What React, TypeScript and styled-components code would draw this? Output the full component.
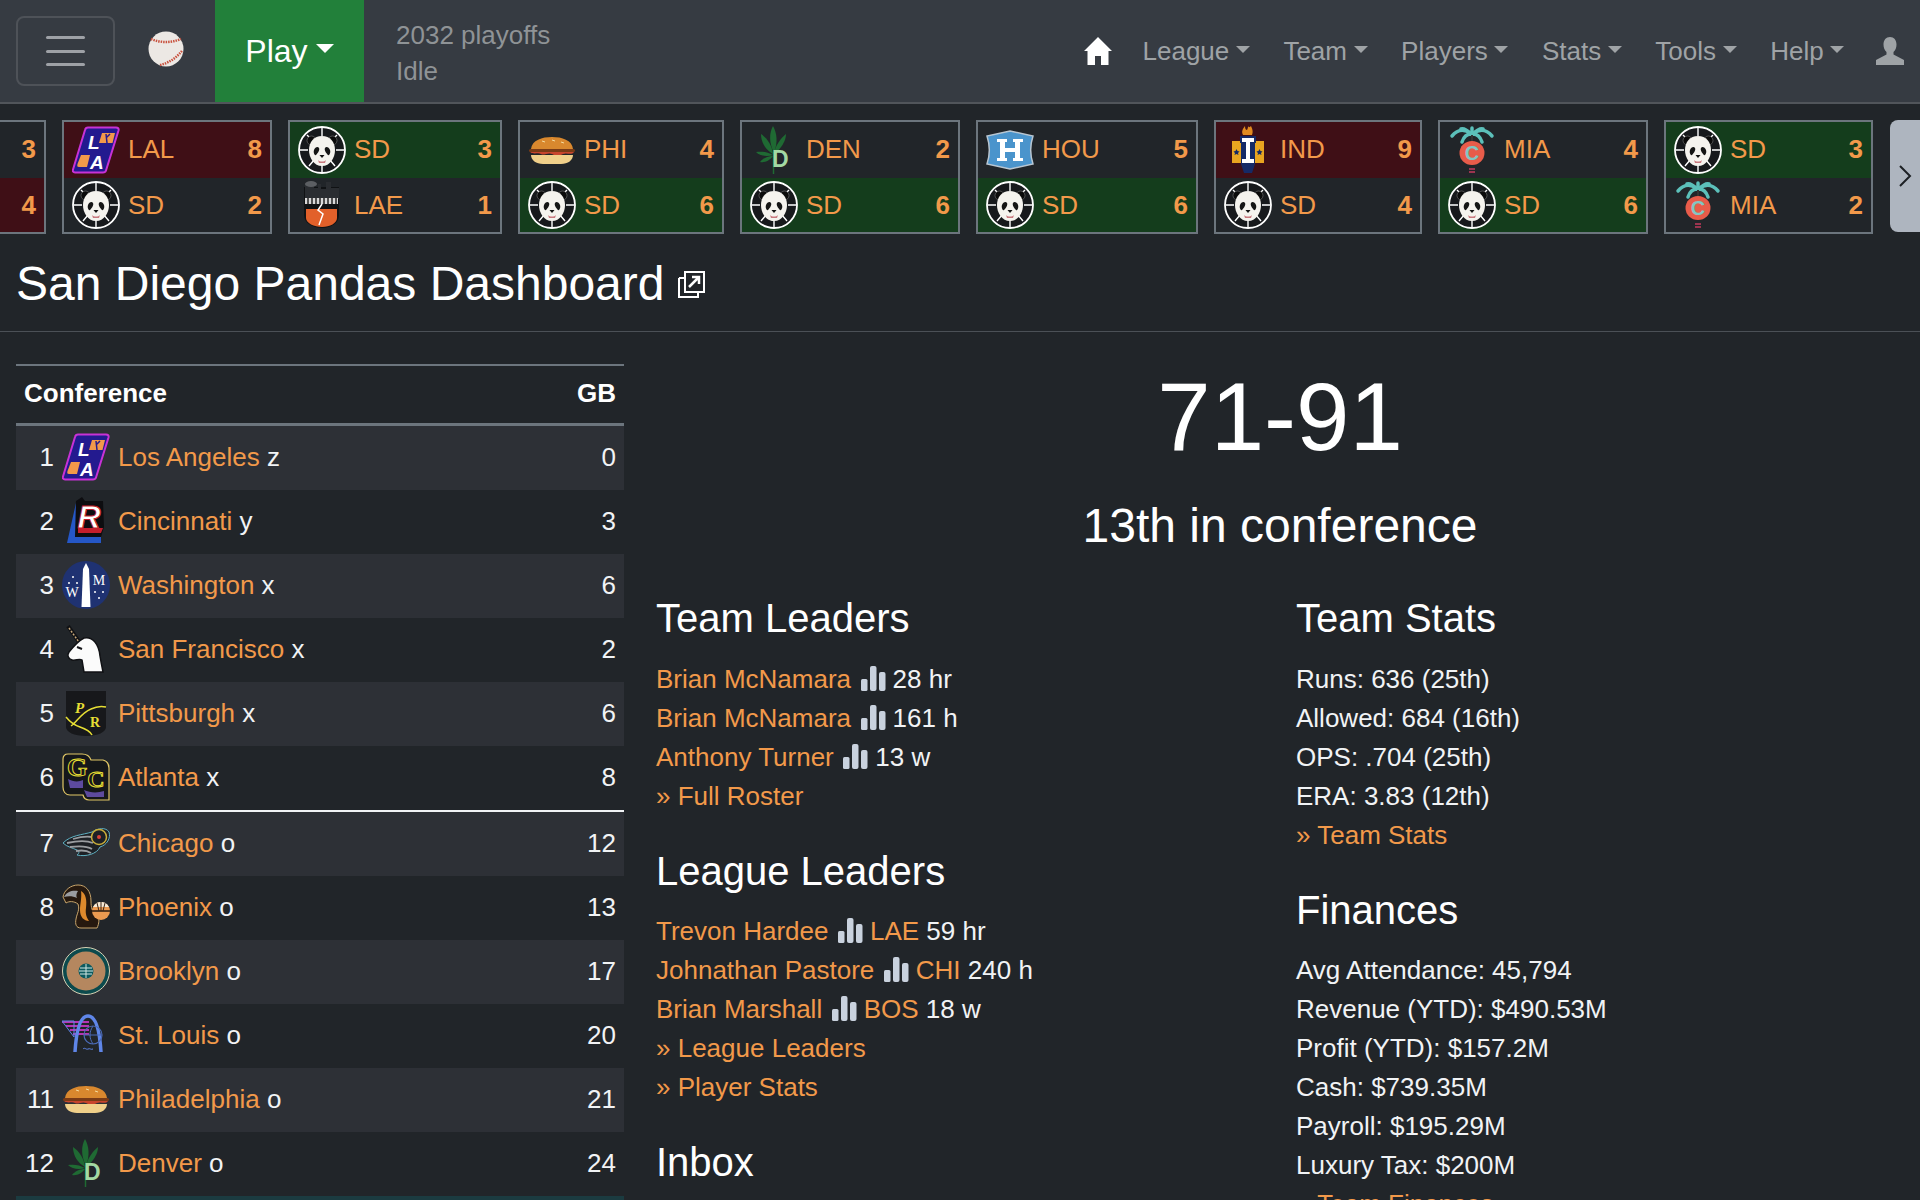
import React from 'react'
import styled, { createGlobalStyle } from 'styled-components'

const ORANGE = '#f2994a'

const GlobalStyle = createGlobalStyle`
  html, body {
    margin: 0;
    padding: 0;
    background: #212529;
  }
  body {
    font-family: "Liberation Sans", Arial, sans-serif;
    font-size: 26px;
    line-height: 39px;
    color: #f1f3f5;
  }
`

const Page = styled.div`
  width: 1920px;
  height: 1200px;
  overflow: hidden;
  background: #212529;
`

/* top navbar */
const Navbar = styled.nav`
  display: flex;
  align-items: stretch;
  height: 102px;
  background: #363b42;
  border-bottom: 2px solid #51555a;
`

const Burger = styled.button`
  display: flex;
  flex-direction: column;
  justify-content: center;
  align-items: center;
  gap: 10.5px;
  box-sizing: border-box;
  width: 99px;
  height: 70px;
  margin: 16px 0 0 16px;
  background: none;
  border: 2px solid #4e5258;
  border-radius: 8px;
  padding: 0;
`

const BurgerLine = styled.span`
  display: block;
  width: 39px;
  height: 3px;
  border-radius: 2px;
  background: #9ea1a6;
`

const Ball = styled.svg`
  display: block;
  width: 36px;
  height: 36px;
  margin: 31px 31px 0 33px;
`

const Caret = styled.span`
  display: inline-block;
  margin-left: 0.255em;
  vertical-align: 0.255em;
  border-top: 0.3em solid currentColor;
  border-left: 0.3em solid transparent;
  border-right: 0.3em solid transparent;
`

const PlayButton = styled.button`
  width: 149px;
  padding: 0;
  border: none;
  background: #22803a;
  color: #fff;
  font-family: inherit;
  font-size: 32px;
`

const Status = styled.div`
  display: flex;
  flex-direction: column;
  justify-content: center;
  margin-left: 32px;
  line-height: 36px;
  color: #8f9396;
  padding-top: 4px;
`

const NavLinks = styled.div`
  display: flex;
  align-items: center;
  margin-left: auto;
  padding-right: 16px;
`

const NavItem = styled.a`
  padding: 0 16.75px;
  color: #9fa3a6;
  display: block;
`

const HomeIcon = styled.svg`
  display: block;
  width: 28px;
  height: 28px;
  margin-right: 14px;
`

const UserIcon = styled.svg`
  display: block;
  width: 28px;
  height: 28px;
  margin-left: 15px;
`

/* scoreboard strip */
const Strip = styled.div`
  display: flex;
  align-items: flex-start;
  gap: 16px;
  padding-top: 16px;
  height: 114px;
  overflow: hidden;
`

const GameBox = styled.div<{ $w: number }>`
  flex: 0 0 ${({ $w }) => $w}px;
  box-sizing: border-box;
  height: 114px;
  border: 2px solid #6c757d;
`

const ClippedBox = styled(GameBox)`
  border-left: none;
`

const GameRow = styled.div<{ $tone?: 'win' | 'loss' }>`
  display: grid;
  grid-template-columns: 48px 1fr auto;
  column-gap: 8px;
  align-items: center;
  box-sizing: border-box;
  height: 54px;
  padding: 0 8px;
  background: ${({ $tone }) =>
    $tone === 'win' ? '#143d1c' : $tone === 'loss' ? '#3f0f16' : 'transparent'};
  color: ${ORANGE};

  &:first-child {
    height: 56px;
    padding-bottom: 1px;
  }
`

const ScoreOnlyRow = styled(GameRow)`
  grid-template-columns: 1fr;
  justify-items: end;
`

const Score = styled.b`
  font-weight: 700;
`

const NextButton = styled.div`
  flex: 0 0 auto;
  display: flex;
  align-items: center;
  justify-content: center;
  width: 30px;
  height: 112px;
  margin-left: auto;
  background: #aeb5bf;
  border-radius: 8px 0 0 8px;
`

/* page title */
const TitleBar = styled.div`
  display: flex;
  align-items: center;
  box-sizing: border-box;
  height: 98px;
  padding: 3px 16px 0;
  border-bottom: 1px solid #4b5056;
`

const PageTitle = styled.h1`
  margin: 0 14px 0 0;
  font-size: 48px;
  line-height: 58px;
  font-weight: 400;
  color: #fff;
`

const Content = styled.div`
  display: grid;
  grid-template-columns: 640px 1280px;
`

/* standings */
const Standings = styled.section`
  margin: 32px 16px 0;
  width: 608px;
  border-top: 2px solid #6c757d;
`

const StandingsHead = styled.div`
  display: flex;
  justify-content: space-between;
  align-items: center;
  box-sizing: border-box;
  height: 60px;
  padding: 0 8px 2px;
  border-bottom: 3px solid #6c757d;
  font-weight: 700;
  color: #fff;
`

const Row = styled.div<{ $striped?: boolean; $cutoff?: boolean }>`
  display: grid;
  grid-template-columns: 30px 48px 1fr auto;
  column-gap: 8px;
  align-items: center;
  box-sizing: border-box;
  height: 64px;
  padding: 0 8px 2px;
  background: ${({ $striped }) => ($striped ? '#2d3036' : 'transparent')};
  ${({ $cutoff }) => $cutoff && 'box-shadow: 0 2px 0 #f1f3f5; margin-bottom: 2px;'}
`

const OwnRow = styled.div`
  height: 64px;
  background: #1b3b40;
`

const Rank = styled.span`
  text-align: right;
  white-space: nowrap;
`

const Link = styled.a`
  color: ${ORANGE};
`

/* summary panel */
const Summary = styled.section`
  padding: 27px 16px 0;
`

const Record = styled.div`
  font-size: 96px;
  line-height: 115px;
  text-align: center;
  color: #fff;
`

const ConfRank = styled.div`
  margin-top: 23px;
  font-size: 48px;
  line-height: 58px;
  text-align: center;
  color: #fff;
`

const Columns = styled.div`
  display: grid;
  grid-template-columns: 640px 608px;
  margin-top: 39px;
`

const Block = styled.div`
  margin-bottom: 31px;
`

const BlockTitle = styled.h3`
  margin: 0 0 17.5px;
  font-size: 40px;
  line-height: 48px;
  font-weight: 400;
  color: #fff;
`

const Line = styled.div`
  white-space: nowrap;
`

const Bars = styled.svg`
  display: inline-block;
  width: 25px;
  height: 25px;
  margin: 0 7px 0 9.5px;
  vertical-align: -3px;
`

const ChartIcon = () => (
  <Bars viewBox="0 0 25 25">
    <rect x="0" y="13" width="6.5" height="12" rx="1.5" fill="#c9d2de" />
    <rect x="9" y="0" width="6.5" height="25" rx="2" fill="#c9d2de" />
    <rect x="18" y="6" width="6.5" height="19" rx="2" fill="#c9d2de" />
  </Bars>
)

const LogoSvg = styled.svg`
  display: block;
  width: 48px;
  height: 48px;
`

const Panda = () => (
  <LogoSvg viewBox="0 0 48 48">
    <circle cx="24" cy="24" r="23" fill="#17191c" stroke="#fff" strokeWidth="1.8" />
    <g stroke="#fff" strokeWidth="1.4">
      <path d="M24 2v8M24 38v8M2 24h8M38 24h8M9 9l5 5M39 9l-5 5M11 40l5-6M37 40l-5-6" />
    </g>
    <circle cx="13.5" cy="14.5" r="4.5" fill="#0b0b0b" stroke="#777" strokeWidth=".6" />
    <circle cx="34.5" cy="14.5" r="4.5" fill="#0b0b0b" stroke="#777" strokeWidth=".6" />
    <path d="M24 10c8 0 13 6 13 14 0 8-5 16-13 16s-13-8-13-16c0-8 5-14 13-14z" fill="#f5f3ee" />
    <path d="M16 24c1-3 4-4 5-2 1 2-1 5-3 7-1 1-3-2-2-5zM32 24c-1-3-4-4-5-2-1 2 1 5 3 7 1 1 3-2 2-5z" fill="#151515" />
    <path d="M21.500 29h5l-2.500 3z" fill="#111" />
    <path d="M20 34c2 2 6 2 8 0l-1 3h-6z" fill="#c9797f" />
  </LogoSvg>
)

const LosAngeles = () => (
  <LogoSvg viewBox="0 0 48 48">
    <path d="M16 1.500h28c2 0 3 1 2.500 3L34 44.500c-.5 1.500-1 2-3 2H3c-2 0-2.500-1.500-2-3L13 4c.5-2 1.500-2.500 3-2.500z" fill="#231a8f" stroke="#c832d6" strokeWidth="2" />
    <text x="16" y="23" fontFamily="Liberation Sans" fontWeight="700" fontStyle="italic" fontSize="19" fill="#fff">L</text>
    <text x="18" y="43" fontFamily="Liberation Sans" fontWeight="700" fontStyle="italic" fontSize="19" fill="#fff">A</text>
    <path d="M30 7h13l-2.500 10H27z" fill="#f2994a" />
    <path d="M34 8l1 9M38 8l-4 4" stroke="#231a8f" strokeWidth="1.500" />
    <path d="M9 29h9l-3 12H7c-2 0-2-1-1.500-3z" fill="#f2994a" />
  </LogoSvg>
)

const Eagles = () => (
  <LogoSvg viewBox="0 0 48 48">
    <path d="M6 6h35v28c0 8-8 13-17 13S6 42 6 34z" fill="#101214" />
    <path d="M7 2h9v5h4V3h3v5h5V1h5v6h8v11H7z" fill="#2a2d31" />
    <ellipse cx="13" cy="3" rx="6" ry="3" fill="#5c5f63" />
    <rect x="7" y="17" width="33" height="6" fill="#d8d8d8" />
    <path d="M10 17v6M14 17v6M18 17v6M22 17v6M26 17v6M30 17v6M34 17v6M38 17v6" stroke="#222" strokeWidth="1.500" />
    <path d="M8 28h31v9c0 5-7 9-15 9S8 42 8 37z" fill="#e2602a" />
    <path d="M24 23l-4 6 5 4-4 11" stroke="#fff" strokeWidth="1.500" fill="none" />
  </LogoSvg>
)

const Hoagie = () => (
  <LogoSvg viewBox="0 0 48 48">
    <path d="M3 23C4 14 14 11 24 11s20 3 21 12z" fill="#d9882e" />
    <path d="M14 15l3 1M24 14l3 1M33 16l3 1" stroke="#f5dca0" strokeWidth="1" />
    <rect x="1" y="23" width="46" height="3" rx="1.500" fill="#7a3b16" />
    <path d="M2 26c4 3 8 0 11 2s7-2 11 0 7 2 11 0 8 2 11-2z" fill="#c8452c" />
    <path d="M3 29h42c0 5-5 9-12 9H15C8 38 3 34 3 29z" fill="#f0d08a" />
  </LogoSvg>
)

const Leaf = () => (
  <LogoSvg viewBox="0 0 48 48">
    <g fill="#1f6a33">
      <path d="M23 0c4 7 5 16 1 27-5-10-5-20-1-27z" />
      <path d="M11 8c6 4 11 11 12 20C16 24 11 17 11 8z" />
      <path d="M36 8c0 7-5 15-12 20 1-8 6-15 12-20z" />
      <path d="M6 26c6-1 12 0 17 3-6 2-13 1-17-3z" />
      <path d="M10 36c3-4 8-6 13-6-3 4-8 7-13 6z" />
    </g>
    <path d="M23.500 26v22" stroke="#1f6a33" strokeWidth="1.500" />
    <text x="22" y="41" fontFamily="Liberation Sans" fontWeight="700" fontSize="23" fill="#a3d9a3">D</text>
  </LogoSvg>
)

const Houston = () => (
  <LogoSvg viewBox="0 0 48 48">
    <path d="M24 5l23 5c-3 9-3 19 0 28l-23 5-23-5c3-9 3-19 0-28z" fill="#4a94cc" stroke="#b8c6d2" strokeWidth="1.500" />
    <path d="M11 13h10v3h-2v6h10v-6h-2v-3h10v3h-3v16h3v3H27v-3h2v-6H19v6h2v3H11v-3h3V16h-3z" fill="#fff" />
  </LogoSvg>
)

const Indiana = () => (
  <LogoSvg viewBox="0 0 48 48">
    <path d="M19 9c-2-4 0-6 2-9 0 3 1 4 2 4 1-2 1-3 1-4 1 2 2 1 3 0 2 4 2 6 1 9z" fill="#e28a1f" />
    <rect x="8" y="15" width="32" height="22" fill="#e9a520" />
    <path d="M12.500 23l1 2 2 .5-1.500 1.500.5 2-2-1-2 1 .5-2L9.500 25.500l2-.5zM35.500 23l1 2 2 .5-1.500 1.500.5 2-2-1-2 1 .5-2-1.500-1.500 2-.5z" fill="#152a66" />
    <path d="M16 10h16v7h-1v21l-3 9h-8l-3-9V17h-1z" fill="#152a66" />
    <path d="M18 12h12v4h-4v17h4v4H18v-4h4V16h-4z" fill="#fff" />
  </LogoSvg>
)

const Miami = () => (
  <LogoSvg viewBox="0 0 48 48">
    <g fill="none" stroke="#5cc0ba" strokeWidth="3.500" strokeLinecap="round">
      <path d="M23 8C17 3 10 3 4 10" />
      <path d="M23 8c-4-4-7-6-10-5" />
      <path d="M23 8c-3 0-7 2-9 8" />
      <path d="M25 8c6-5 13-5 19 2" />
      <path d="M25 8c4-4 7-6 10-5" />
      <path d="M25 8c3 0 7 2 9 8" />
      <path d="M24 8V2" />
    </g>
    <rect x="23" y="9" width="2" height="7" fill="#333" />
    <ellipse cx="24" cy="27" rx="12.500" ry="12" fill="#e85c4a" />
    <text x="24" y="34" textAnchor="middle" fontFamily="Liberation Sans" fontWeight="700" fontSize="20" fill="#83c6c2">C</text>
    <path d="M21 43h6M21 46h6" stroke="#c43a5c" strokeWidth="1.500" />
  </LogoSvg>
)

const Cincinnati = () => (
  <LogoSvg viewBox="0 0 48 48">
    <path d="M14 6L5 46h34V38H18z" fill="#2557c7" />
    <path d="M14 4l6-4 3 4h18l1 26-3 10H13z" fill="#0d0d10" />
    <path d="M16 36h23l2-5H16z" fill="#c41f2d" />
    <text x="27" y="31" textAnchor="middle" fontFamily="Liberation Sans" fontWeight="700" fontStyle="italic" fontSize="32" fill="#fff" stroke="#c41f2d" strokeWidth="1">R</text>
  </LogoSvg>
)

const Washington = () => (
  <LogoSvg viewBox="0 0 48 48">
    <ellipse cx="24" cy="24" rx="24" ry="24" fill="#1f3272" />
    <path d="M24 2l3 6 1.500 38h-9L21 8z" fill="#fff" />
    <text x="10" y="36" textAnchor="middle" fontFamily="Liberation Serif" fontSize="14" fill="#fff">W</text>
    <text x="37" y="24" textAnchor="middle" fontFamily="Liberation Serif" fontSize="14" fill="#fff">M</text>
    <g fill="#fff">
      <circle cx="11" cy="16" r="1" /><circle cx="7" cy="22" r="1" /><circle cx="15" cy="22" r="1" />
      <circle cx="33" cy="31" r="1" /><circle cx="41" cy="31" r="1" /><circle cx="37" cy="37" r="1" />
    </g>
  </LogoSvg>
)

const Unicorn = () => (
  <LogoSvg viewBox="0 0 48 48">
    <path d="M6 1l14 20" stroke="#101114" strokeWidth="4" />
    <path d="M7 3l12 17" stroke="#c7a87a" strokeWidth="1.500" strokeDasharray="2 1.500" />
    <path d="M22 13c9-2 15 7 16 18 1 6 2 11 3 16H22l-2-12c-3-2-6 1-10 0s-5-5-3-8c4-5 9-11 15-14z" fill="#fbfbfb" stroke="#101114" strokeWidth="1.500" />
    <path d="M15 22l5 2" stroke="#16161a" strokeWidth="2" />
  </LogoSvg>
)

const Pittsburgh = () => (
  <LogoSvg viewBox="0 0 48 48">
    <path d="M4 2h40v36c0 5-8 9-20 9S4 43 4 38z" fill="#17181b" />
    <path d="M4 28c4 5 8 8 14 10 6 2 10 4 12 8M9 37c6-4 10-13 20-17 6-3 11-3 15-2" fill="none" stroke="#e6de34" strokeWidth="1.500" />
    <text x="13" y="24" fontFamily="Liberation Serif" fontStyle="italic" fontWeight="700" fontSize="15" fill="#e6de34">P</text>
    <text x="28" y="38" fontFamily="Liberation Serif" fontWeight="700" fontSize="14" fill="#e6de34">R</text>
  </LogoSvg>
)

const Atlanta = () => (
  <LogoSvg viewBox="0 0 48 48">
    <path d="M6 1h14c6 0 8 3 9 6h12c4 1 6 4 6 8v32H27c-3 0-5-1-6-5H8c-5 0-7-4-7-8V6c0-3 2-5 5-5z" fill="#15171a" stroke="#e2c766" strokeWidth="1.200" />
    <path d="M6 26c5 3 11 3 15 1v8H8zM22 37c6 3 14 3 20 1v6H25z" fill="#5d4a9e" />
    <text x="15" y="23" textAnchor="middle" fontFamily="Liberation Serif" fontWeight="700" fontSize="26" fill="none" stroke="#e6de34" strokeWidth="1">G</text>
    <text x="34" y="34" textAnchor="middle" fontFamily="Liberation Serif" fontWeight="700" fontSize="24" fill="none" stroke="#e6de34" strokeWidth="1">C</text>
  </LogoSvg>
)

const Chicago = () => (
  <LogoSvg viewBox="0 0 48 48">
    <path d="M1 24C9 16 20 16 30 13c6-4 14-5 17 0 2 6-2 13-9 15-3 7-14 10-23 8 3-2 2-4 0-5-4-2-10-3-14-7z" fill="#1d2025" stroke="#5fb0c2" strokeWidth="1" />
    <path d="M5 24c9-2 19-3 26 0M8 28c8-1 17-1 22 2M14 32c6-1 12 0 15 2M11 20c7-2 13-3 19-2" fill="none" stroke="#9a9da1" strokeWidth="1.800" />
    <circle cx="37" cy="18" r="7.500" fill="none" stroke="#c9ae3a" strokeWidth="1.500" />
    <circle cx="37" cy="18" r="2" fill="#d8413a" />
  </LogoSvg>
)

const Phoenix = () => (
  <LogoSvg viewBox="0 0 48 48">
    <path d="M1 14c1-7 8-12 15-12 8 0 13 6 13 16 0 6 1 12 6 15 3 2 2 8 0 12H19c-5 0-6-4-5-9 1-6 4-9 2-15-4-3-9-3-12-1z" fill="#26190f" stroke="#c9a56b" strokeWidth="1" />
    <path d="M2 14c3-6 9-7 14-6-2 3-2 5-1 7-4-2-9-2-13-1z" fill="#9a9da1" />
    <path d="M19 8c5 3 6 9 5 17-1 6 1 10 3 13-5 0-9-4-9-11 0-6 2-12 1-19z" fill="#df8a2c" />
    <circle cx="39" cy="28" r="9" fill="#ec9a50" />
    <path d="M30 28h18" stroke="#2a1a0f" strokeWidth="1.500" />
    <path d="M31 24c2-4 5-5 8-5s6 1 8 5z" fill="#f5e9d6" />
    <path d="M39 19v9M35 20l2 8M43 20l-2 8" stroke="#3a2414" strokeWidth="1" />
  </LogoSvg>
)

const Brooklyn = () => (
  <LogoSvg viewBox="0 0 48 48">
    <circle cx="24" cy="24" r="23.500" fill="#0c4a4d" stroke="#d8d2b5" strokeWidth="1" />
    <circle cx="24" cy="24" r="19.500" fill="#b5875f" />
    <circle cx="24" cy="24" r="7.500" fill="#0c5a60" />
    <path d="M18 21h12M17 24h14M18 27h12M24 17v14" stroke="#cfe6e2" strokeWidth="1" />
  </LogoSvg>
)

const StLouis = () => (
  <LogoSvg viewBox="0 0 48 48">
    <path d="M0 11h27M4 15h23M8 19h19M11 23h16" stroke="#b535b5" strokeWidth="2" />
    <path d="M13 41c1-16 4-36 13-36s12 20 13 36" fill="none" stroke="#5f86e8" strokeWidth="3.500" />
    <path d="M12 10L0 10l12 16z" fill="none" stroke="#5f86e8" strokeWidth="1" />
    <circle cx="31" cy="24" r="9" fill="none" stroke="#4b6bb8" strokeWidth="1.200" />
    <path d="M22 24h18M31 15c-4 6-4 12 0 18" stroke="#4b6bb8" strokeWidth="1" fill="none" />
    <path d="M21 38c2-2 3 1 5 0s3 1 5 0" stroke="#5f86e8" strokeWidth="1" fill="none" />
  </LogoSvg>
)

type Side = { abbrev: string; logo: React.FC; score: number; tone?: 'win' | 'loss' }

const GAMES: { w: number; top: Side; bottom: Side }[] = [
  { w: 210, top: { abbrev: 'LAL', logo: LosAngeles, score: 8, tone: 'loss' }, bottom: { abbrev: 'SD', logo: Panda, score: 2 } },
  { w: 214, top: { abbrev: 'SD', logo: Panda, score: 3, tone: 'win' }, bottom: { abbrev: 'LAE', logo: Eagles, score: 1 } },
  { w: 206, top: { abbrev: 'PHI', logo: Hoagie, score: 4 }, bottom: { abbrev: 'SD', logo: Panda, score: 6, tone: 'win' } },
  { w: 220, top: { abbrev: 'DEN', logo: Leaf, score: 2 }, bottom: { abbrev: 'SD', logo: Panda, score: 6, tone: 'win' } },
  { w: 222, top: { abbrev: 'HOU', logo: Houston, score: 5 }, bottom: { abbrev: 'SD', logo: Panda, score: 6, tone: 'win' } },
  { w: 208, top: { abbrev: 'IND', logo: Indiana, score: 9, tone: 'loss' }, bottom: { abbrev: 'SD', logo: Panda, score: 4 } },
  { w: 210, top: { abbrev: 'MIA', logo: Miami, score: 4 }, bottom: { abbrev: 'SD', logo: Panda, score: 6, tone: 'win' } },
  { w: 209, top: { abbrev: 'SD', logo: Panda, score: 3, tone: 'win' }, bottom: { abbrev: 'MIA', logo: Miami, score: 2 } },
]

const STANDINGS: [number, React.FC, string, string, number][] = [
  [1, LosAngeles, 'Los Angeles', 'z', 0],
  [2, Cincinnati, 'Cincinnati', 'y', 3],
  [3, Washington, 'Washington', 'x', 6],
  [4, Unicorn, 'San Francisco', 'x', 2],
  [5, Pittsburgh, 'Pittsburgh', 'x', 6],
  [6, Atlanta, 'Atlanta', 'x', 8],
  [7, Chicago, 'Chicago', 'o', 12],
  [8, Phoenix, 'Phoenix', 'o', 13],
  [9, Brooklyn, 'Brooklyn', 'o', 17],
  [10, StLouis, 'St. Louis', 'o', 20],
  [11, Hoagie, 'Philadelphia', 'o', 21],
  [12, Leaf, 'Denver', 'o', 24],
]

const NAV = ['League', 'Team', 'Players', 'Stats', 'Tools', 'Help']

const GameSide = ({ side }: { side: Side }) => {
  const Logo = side.logo
  return (
    <GameRow $tone={side.tone}>
      <Logo />
      <span>{side.abbrev}</span>
      <Score>{side.score}</Score>
    </GameRow>
  )
}

const App = () => {
  return (
    <Page>
      <GlobalStyle />
      <Navbar>
        <Burger>
          <BurgerLine />
          <BurgerLine />
          <BurgerLine />
        </Burger>
        <Ball viewBox="0 0 36 36">
          <circle cx="18" cy="18" r="17.500" fill="#ece8e4" />
          <path d="M3 8c10 4 20 4 30 0" stroke="#c9523f" strokeWidth="2.500" strokeDasharray="1.500 1" fill="none" />
          <path d="M12 34c9-2 16-7 22-14" stroke="#c9523f" strokeWidth="2.500" strokeDasharray="1.500 1" fill="none" />
        </Ball>
        <PlayButton>
          Play
          <Caret />
        </PlayButton>
        <Status>
          <div>2032 playoffs</div>
          <div>Idle</div>
        </Status>
        <NavLinks>
          <HomeIcon viewBox="0 0 28 28">
            <path d="M14 0L28 14h-3.500v14H17v-9h-6v9H3.500V14H0z" fill="#fff" />
          </HomeIcon>
          {NAV.map((n) => (
            <NavItem key={n}>
              {n}
              <Caret />
            </NavItem>
          ))}
          <UserIcon viewBox="0 0 28 28">
            <path d="M14 0c4 0 6.500 3 6.500 7.500 0 3-1 5.500-3 7.500v2.500L28 23v5H0v-5l10.500-5.500V15c-2-2-3-4.500-3-7.500C7.500 3 10 0 14 0z" fill="#9fa3a6" />
          </UserIcon>
        </NavLinks>
      </Navbar>

      <Strip>
        <ClippedBox $w={46}>
          <ScoreOnlyRow>
            <Score>3</Score>
          </ScoreOnlyRow>
          <ScoreOnlyRow $tone="loss">
            <Score>4</Score>
          </ScoreOnlyRow>
        </ClippedBox>
        {GAMES.map((g, i) => (
          <GameBox key={i} $w={g.w}>
            <GameSide side={g.top} />
            <GameSide side={g.bottom} />
          </GameBox>
        ))}
        <NextButton>
          <svg width="14" height="22" viewBox="0 0 14 22">
            <path d="M2 1l10 10L2 21" fill="none" stroke="#1d2024" strokeWidth="2" />
          </svg>
        </NextButton>
      </Strip>

      <TitleBar>
        <PageTitle>San Diego Pandas Dashboard</PageTitle>
        <svg width="27" height="27" viewBox="0 0 27 27">
          <path d="M1 7h6M1 7v19h19v-5" fill="none" stroke="#fff" strokeWidth="2" />
          <rect x="7" y="1" width="19" height="20" fill="#212529" stroke="#fff" strokeWidth="2" />
          <path d="M11 16l10-10M14 6h7v7" fill="none" stroke="#fff" strokeWidth="2.500" />
        </svg>
      </TitleBar>

      <Content>
        <Standings>
          <StandingsHead>
            <span>Conference</span>
            <span>GB</span>
          </StandingsHead>
          {STANDINGS.map(([rank, TeamLogo, name, clinch, gb], i) => (
            <Row key={rank} $striped={i % 2 === 0} $cutoff={rank === 6}>
              <Rank>{rank}</Rank>
              <TeamLogo />
              <span>
                <Link>{name}</Link> {clinch}
              </span>
              <span>{gb}</span>
            </Row>
          ))}
          <OwnRow />
        </Standings>

        <Summary>
          <Record>71-91</Record>
          <ConfRank>13th in conference</ConfRank>
          <Columns>
            <div>
              <Block>
                <BlockTitle>Team Leaders</BlockTitle>
                <Line>
                  <Link>Brian McNamara</Link>
                  <ChartIcon />
                  28 hr
                </Line>
                <Line>
                  <Link>Brian McNamara</Link>
                  <ChartIcon />
                  161 h
                </Line>
                <Line>
                  <Link>Anthony Turner</Link>
                  <ChartIcon />
                  13 w
                </Line>
                <Line>
                  <Link>» Full Roster</Link>
                </Line>
              </Block>
              <Block>
                <BlockTitle>League Leaders</BlockTitle>
                <Line>
                  <Link>Trevon Hardee</Link>
                  <ChartIcon />
                  <Link>LAE</Link> 59 hr
                </Line>
                <Line>
                  <Link>Johnathan Pastore</Link>
                  <ChartIcon />
                  <Link>CHI</Link> 240 h
                </Line>
                <Line>
                  <Link>Brian Marshall</Link>
                  <ChartIcon />
                  <Link>BOS</Link> 18 w
                </Line>
                <Line>
                  <Link>» League Leaders</Link>
                </Line>
                <Line>
                  <Link>» Player Stats</Link>
                </Line>
              </Block>
              <Block>
                <BlockTitle>Inbox</BlockTitle>
              </Block>
            </div>
            <div>
              <Block>
                <BlockTitle>Team Stats</BlockTitle>
                <Line>Runs: 636 (25th)</Line>
                <Line>Allowed: 684 (16th)</Line>
                <Line>OPS: .704 (25th)</Line>
                <Line>ERA: 3.83 (12th)</Line>
                <Line>
                  <Link>» Team Stats</Link>
                </Line>
              </Block>
              <Block>
                <BlockTitle>Finances</BlockTitle>
                <Line>Avg Attendance: 45,794</Line>
                <Line>Revenue (YTD): $490.53M</Line>
                <Line>Profit (YTD): $157.2M</Line>
                <Line>Cash: $739.35M</Line>
                <Line>Payroll: $195.29M</Line>
                <Line>Luxury Tax: $200M</Line>
                <Line>
                  <Link>» Team Finances</Link>
                </Line>
              </Block>
            </div>
          </Columns>
        </Summary>
      </Content>
    </Page>
  )
}

export default App
